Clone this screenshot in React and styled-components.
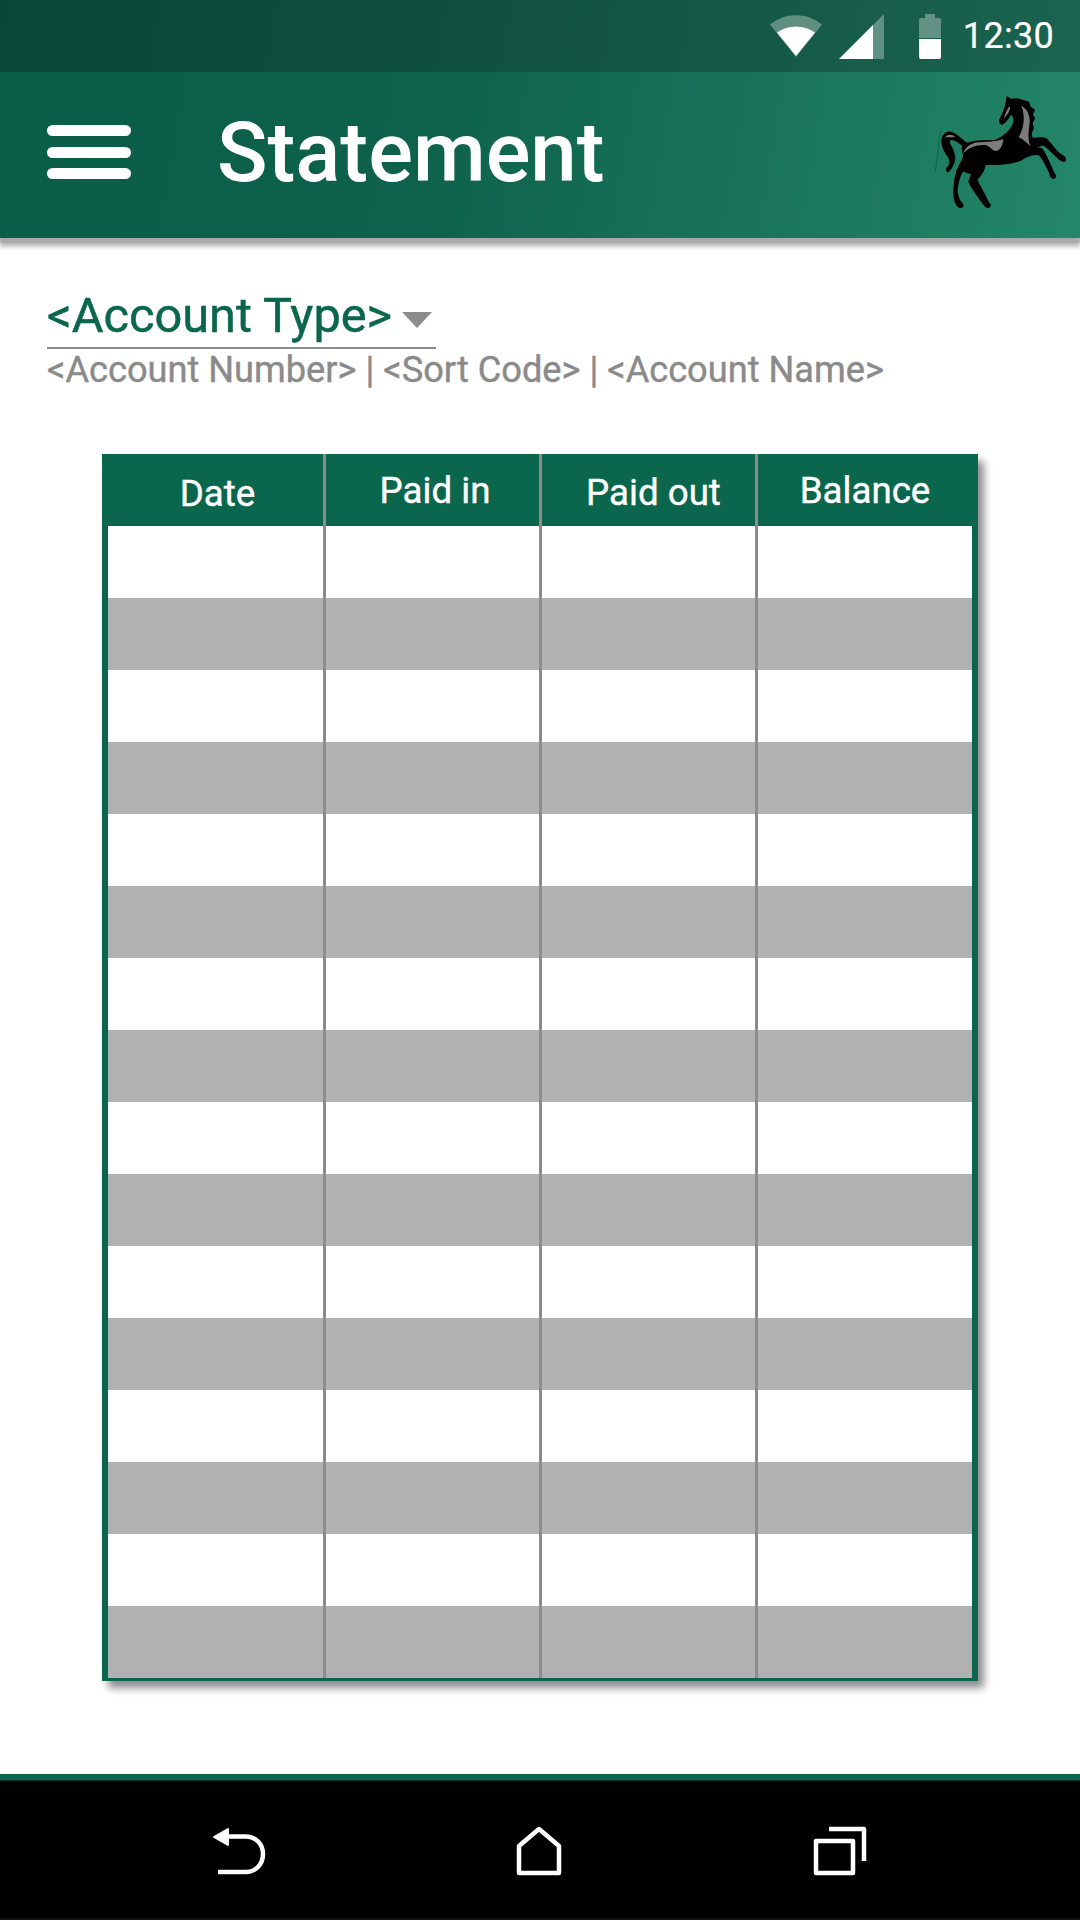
import React from "react";
import styled, { createGlobalStyle } from "styled-components";

const Global = createGlobalStyle`
  html, body { margin: 0; padding: 0; background: #fff; }
  body { font-family: Roboto, "Liberation Sans", sans-serif; }
`;

const Page = styled.div`
  width: 1080px; height: 1920px; display: flex; flex-direction: column; background: #fff; overflow: hidden;
`;
const StatusBar = styled.div`
  height: 72px; flex: none; box-sizing: border-box;
  display: flex; align-items: center; justify-content: flex-end;
  padding-right: 26px;
  background: linear-gradient(100deg, #0a4636 0%, #0f4f3d 40%, #1b6450 100%);
`;
const StatusIcon = styled.svg`
  display: block; flex: none; margin-right: ${p => p.$gap}px;
`;
const Clock = styled.span`
  color: #fff; font-size: 36px; line-height: 72px; font-weight: 400; letter-spacing: 0.3px;
  -webkit-text-stroke: 0.2px #fff;
`;
const Header = styled.header`
  height: 166px; flex: none; box-sizing: border-box; position: relative; z-index: 1;
  display: flex; align-items: center;
  padding: 0 10px 6px 47px;
  background: linear-gradient(100deg, #0a5e47 0%, #0e624b 40%, #248669 100%);
  box-shadow: 0 5px 2px #a8a8a8, 0 9px 4px rgba(0,0,0,.25);
`;
const Burger = styled.div`
  width: 84px; flex: none; display: flex; flex-direction: column; gap: 10.5px; margin-right: 86px;
`;
const BurgerBar = styled.span`
  display: block; height: 11px; border-radius: 6px; background: #fff;
`;
const Title = styled.h1`
  flex: 1; margin: 2px 0 0; color: #fff; font-size: 83.5px; font-weight: 500; line-height: 100px; letter-spacing: 0;
`;
const Logo = styled.svg`
  display: block; flex: none; margin-bottom: 4px;
`;
const Content = styled.main`
  flex: 1; display: flex; flex-direction: column; min-height: 0;
`;
const AccountBlock = styled.div`
  padding: 54px 0 0 47px;
`;
const AccountSelect = styled.div`
  width: 389px; height: 57px; box-sizing: border-box;
  display: flex; align-items: flex-start; gap: 10px;
  border-bottom: 2px solid #8c8c8c;
`;
const AccountType = styled.span`
  color: #0a664d; font-size: 48.7px; line-height: 48px; font-weight: 400; white-space: nowrap;
  -webkit-text-stroke: 0.5px #0a664d;
`;
const Caret = styled.span`
  width: 0; height: 0; margin-top: 20px;
  border-left: 15px solid transparent; border-right: 15px solid transparent; border-top: 16px solid #8c8c8c;
`;
const AccountMeta = styled.p`
  margin: 0; color: #8a8a8a; font-size: 36.2px; line-height: 42px; font-weight: 400; white-space: nowrap;
  -webkit-text-stroke: 0.4px #8a8a8a;
`;
const Table = styled.section`
  margin: 63px 0 0 102px; width: 876px; box-sizing: border-box;
  background: #0a664d;
  border-style: solid; border-color: #0a664d; border-width: 0 6px 3px 6px;
  box-shadow: 6px 7px 8px rgba(0,0,0,.45);
`;
const Row = styled.div`
  display: grid; grid-template-columns: 218px 216px 216px 214px; height: 72px;
  background: ${p => p.$shade ? "#b1b1b1" : "#fff"};
`;
const HeadRow = styled(Row)`
  background: #0a664d;
`;
const Cell = styled.div`
  box-sizing: border-box;
  border-right: ${p => p.$last ? "0" : "3px solid #8c8c8c"};
`;
const HeadCell = styled(Cell)`
  color: #fff; font-size: 36.7px; font-weight: 400; text-align: center; white-space: nowrap;
  line-height: 72px; -webkit-text-stroke: 0.4px #fff;
  padding: ${p => p.$top}px 0 0 ${p => p.$left}px;
`;
const Rule = styled.div`
  flex: none; height: 6px; background: #0a664d; margin-top: auto;
`;
const NavBar = styled.nav`
  height: 140px; flex: none; box-sizing: border-box; background: #000;
  border-top: 1px solid #0d2a22; border-bottom: 2px solid #111;
  display: flex; align-items: flex-start; padding: 45px 0 0 210px;
`;
const NavIcon = styled.svg`
  display: block; flex: none; margin-right: ${p => p.$gap}px; filter: blur(0.6px);
`;

const rows = Array.from({ length: 16 }, (_, i) => i);
const heads = [
  { label: "Date", top: 4, left: 4 },
  { label: "Paid in", top: 1, left: 5 },
  { label: "Paid out", top: 3, left: 10 },
  { label: "Balance", top: 1, left: 0 },
];

const Horse = () => (
  <Logo width="150" height="130" viewBox="0 0 450 390">
    <path d="M62 135L46 260" stroke="#0a664d" strokeWidth="3" fill="none" />
    <path
      fill="#000" stroke="#000" strokeWidth="4" strokeLinejoin="round"
      d="M262 36L272 43L292 42L312 48L326 52L330 66L343 75L336 88L343 100L336 115L340 130L333 145L336 160
      C350 160 365 157 378 161C392 173 405 196 418 206L432 215C438 220 438 228 431 229C422 228 417 222 408 213C395 200 382 186 368 179
      C358 185 345 187 335 190C350 188 362 188 367 193C379 213 391 240 401 263C408 270 408 278 400 280C393 278 390 270 389 263C378 240 368 220 358 209
      C340 205 320 214 300 226C270 238 235 238 195 238C194 256 182 272 170 284C180 305 195 330 204 351C212 356 213 366 203 367C195 366 193 360 189 355C172 330 155 310 147 290
      C150 280 154 272 155 266C145 264 135 260 128 256C118 275 111 295 111 320C113 335 116 345 122 351C130 356 132 366 122 367C113 366 108 360 104 345C100 320 102 285 112 255C120 240 128 225 132 212
      C127 200 126 190 129 183C120 175 114 168 104 165C92 160 86 165 88 175C94 185 104 200 104 222C102 238 92 253 84 260C78 258 78 250 86 244
      C92 235 90 222 82 210C72 198 66 185 66 165C68 150 78 140 92 142C108 144 124 165 142 176C165 165 200 168 225 167C250 157 277 135 282 110C283 98 278 90 272 86C266 98 260 108 250 115C244 120 238 115 239 106C245 92 254 76 258 58C259 50 260 44 262 36Z"
    />
    <path fill="#7c7c7c" d="M304 62C318 70 328 84 329 105C329 130 320 150 331 184C320 172 308 162 296 156C310 135 318 95 304 62Z" />
    <path fill="#7c7c7c" d="M130 205C135 188 150 176 172 172C195 170 225 172 250 162C250 178 240 198 228 198C215 198 212 182 195 180C170 178 145 188 130 205Z" />
    <path fill="#7c7c7c" d="M252 100C255 88 261 72 268 64C272 68 270 78 262 88C258 94 256 98 252 100Z" />
    <path fill="#7c7c7c" d="M74 158C82 148 95 146 106 156C95 158 82 155 74 158Z" />
  </Logo>
);

export default function App() {
  return (
    <Page>
      <Global />
      <StatusBar>
        <StatusIcon $gap={17} width="52" height="42" viewBox="0 0 52 42">
          <path d="M0 9.5C15-3 37-3 52 9.5L26 42Z" fill="#fff" fillOpacity=".32" />
          <path d="M7 17.5C18 9.5 34 9.5 45 17.5L26 41Z" fill="#fff" />
        </StatusIcon>
        <StatusIcon $gap={35} width="45" height="45" viewBox="0 0 45 45">
          <path d="M45 0V45H0Z" fill="#fff" fillOpacity=".32" />
          <path d="M34 11V45H0Z" fill="#fff" />
        </StatusIcon>
        <StatusIcon $gap={22} width="22" height="45" viewBox="0 0 22 45">
          <path d="M6 0H16V4H20.5Q22 4 22 5.500V24H0V5.500Q0 4 1.500 4H6Z" fill="#fff" fillOpacity=".32" />
          <path d="M0 25H22V43Q22 45 20 45H2Q0 45 0 43Z" fill="#fff" />
        </StatusIcon>
        <Clock>12:30</Clock>
      </StatusBar>
      <Header>
        <Burger>
          <BurgerBar />
          <BurgerBar />
          <BurgerBar />
        </Burger>
        <Title>Statement</Title>
        <Horse />
      </Header>
      <Content>
        <AccountBlock>
          <AccountSelect>
            <AccountType>&lt;Account Type&gt;</AccountType>
            <Caret />
          </AccountSelect>
          <AccountMeta>&lt;Account Number&gt; | &lt;Sort Code&gt; | &lt;Account Name&gt;</AccountMeta>
        </AccountBlock>
        <Table>
          <HeadRow>
            {heads.map((h, i) => (
              <HeadCell key={h.label} $top={h.top} $left={h.left} $last={i === 3}>{h.label}</HeadCell>
            ))}
          </HeadRow>
          {rows.map(r => (
            <Row key={r} $shade={r % 2 === 1}>
              {heads.map((h, i) => <Cell key={h.label} $last={i === 3} />)}
            </Row>
          ))}
        </Table>
        <Rule />
      </Content>
      <NavBar>
        <NavIcon $gap={250} width="56" height="50" viewBox="0 0 56 50" fill="none" stroke="#fff" strokeWidth="4.5">
          <path d="M17 10.500H35C46 10.500 53 18 53 28C53 38 46 46 36 46H8" />
          <path d="M4 11L18 3V19Z" fill="#fff" strokeWidth="2" strokeLinejoin="round" />
        </NavIcon>
        <NavIcon $gap={251} width="46" height="50" viewBox="0 0 46 50" fill="none" stroke="#fff" strokeWidth="4.5" strokeLinejoin="round">
          <path d="M23 3L43 20V47H3V20Z" />
        </NavIcon>
        <NavIcon width="54" height="50" viewBox="0 0 54 50" fill="none" stroke="#fff" strokeWidth="4.5" strokeLinejoin="round">
          <path d="M3 15H40V47H3Z" />
          <path d="M16 3H51V35" />
        </NavIcon>
      </NavBar>
    </Page>
  );
}
